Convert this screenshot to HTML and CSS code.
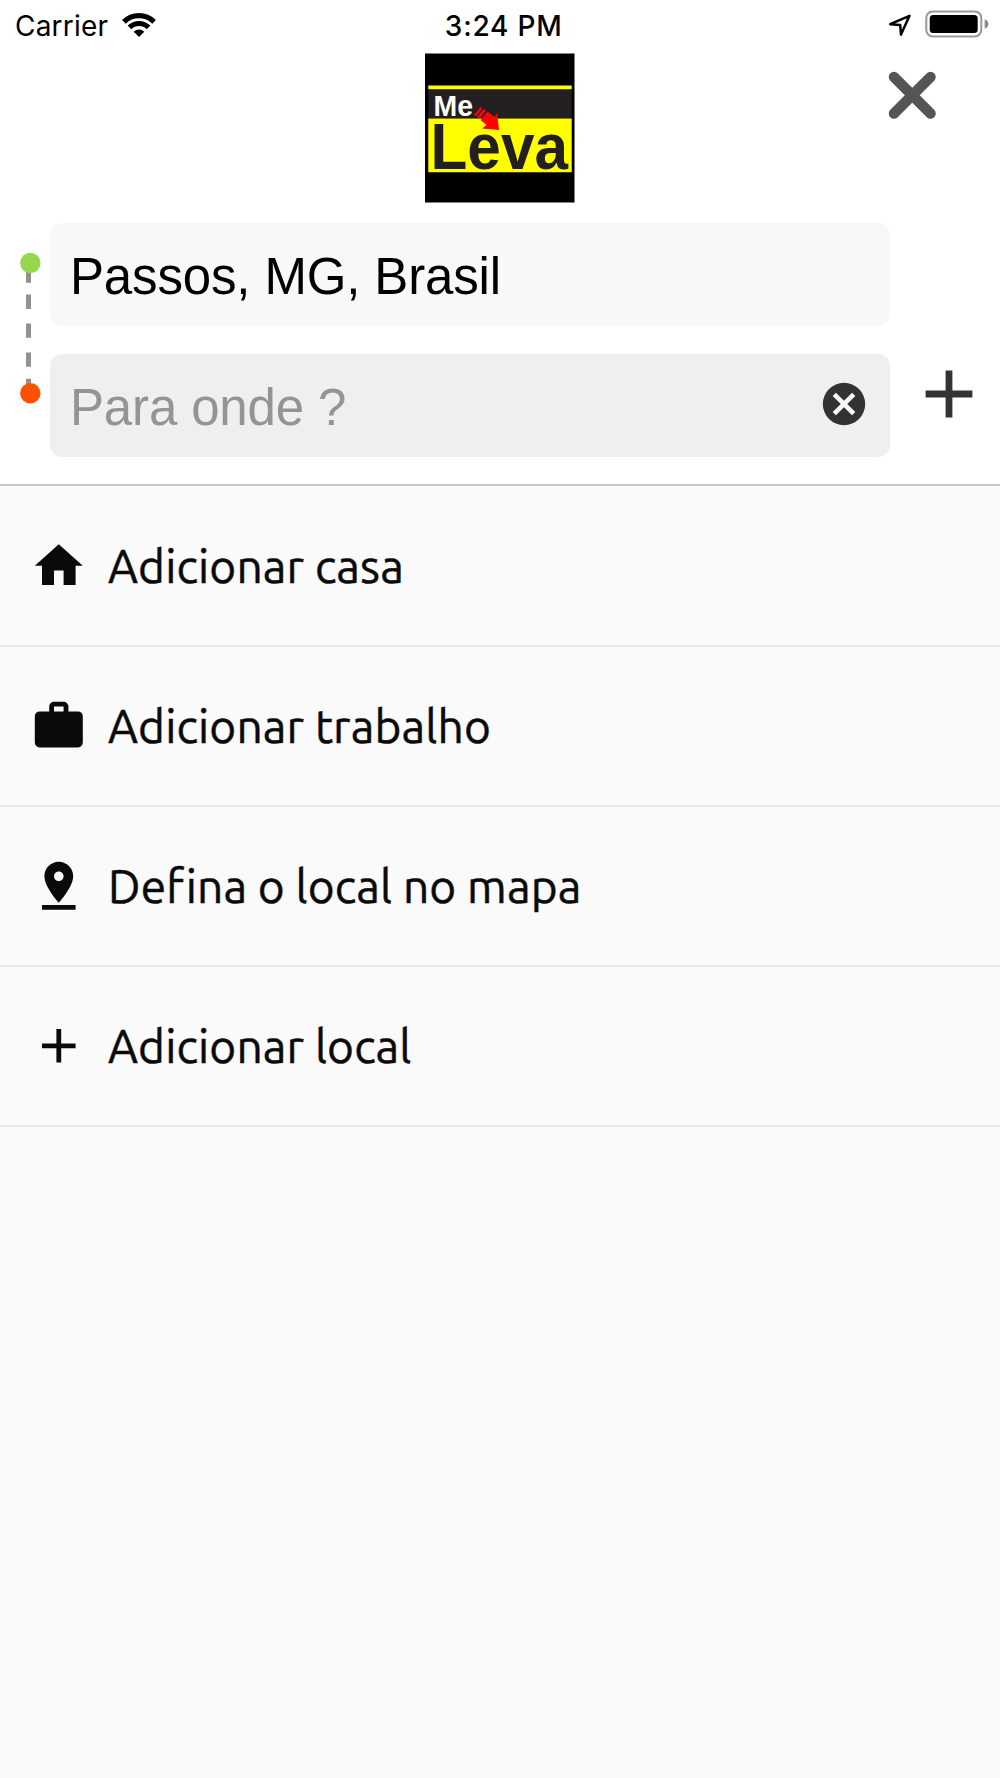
FILE: index.html
```html
<!DOCTYPE html>
<html lang="pt-BR">
<head>
<meta charset="utf-8">
<title>Me Leva</title>
<link rel="stylesheet" href="styles.css">
</head>
<body>
<header class="header">
  <div class="status">
    <div class="status-left">
      <span class="carrier">Carrier</span>
      <svg class="wifi" width="36" height="26" viewBox="0 0 36 26">
        <path d="M2.9 9.9A21.4 21.4 0 0 1 33.1 9.9M8.45 15.45A13.5 13.5 0 0 1 27.55 15.45" fill="none" stroke="#000" stroke-width="5.2"/>
        <path d="M18 25L12.7 19.7A7.5 7.5 0 0 1 23.3 19.7Z"/>
      </svg>
    </div>
    <span class="time">3:24 PM</span>
    <div class="status-right">
      <svg width="24" height="24" viewBox="0 0 24 24"><path d="M2.2 11.2L21.5 2.8L13 21.6L12.2 12Z" fill="none" stroke="#000" stroke-width="2.5" stroke-linejoin="round"/></svg>
      <svg width="64" height="28" viewBox="0 0 64 28">
        <rect x="1.3" y="1.4" width="55" height="25" rx="6.5" fill="none" stroke="#999" stroke-width="2"/>
        <rect x="4.7" y="4.9" width="48" height="18.2" rx="3.5"/>
        <path d="M59.7 9.2A5 5 0 0 1 59.7 18.8Z" fill="#888"/>
      </svg>
    </div>
  </div>
  <div class="brand">
    <svg class="logo" width="150" height="150" viewBox="0 0 150 150">
      <path d="M0 .5H149.5V149.5H0Z"/>
      <path fill="#ff0" d="M3.3 32.5H146.7V36.5H3.3ZM3.3 65.6H146.7V119.3H3.3Z"/>
      <path fill="#231f20" d="M3.3 36.5H146.7V65H3.3Z"/>
      <text class="logo-me" x="8.5" y="63.3" textLength="39.5" lengthAdjust="spacingAndGlyphs">Me</text>
      <text class="logo-leva" x="5.5" y="116.3" textLength="137.5" lengthAdjust="spacingAndGlyphs">Leva</text>
      <path fill="red" d="M49 62L55.5 54L57.5 55.2L51 63.2ZM52 64L58.5 56L61 57.5L54.5 65.7ZM55.5 67L62.5 58.5L69.5 64L72 60L74 77L57 75.5L61.5 72Z"/>
    </svg>
    <button class="icon-button close" aria-label="Fechar">
      <svg width="48" height="48" viewBox="0 0 48 48"><path d="M6 6L42.5 42.5M42.5 6L6 42.5" stroke="#555" stroke-width="10.5" stroke-linecap="round"/></svg>
    </button>
  </div>
  <div class="trip">
    <svg class="route" width="50" height="234" viewBox="0 0 50 234">
      <path fill="#929292" d="M26 48h5v11.7h-5zM26 71.5h5V86h-5zM26 100.4h5v14.4h-5zM26 129.4h5v14.3h-5zM26 155.7h5v8h-5z"/>
      <circle cx="30.3" cy="40" r="10.2" fill="#95d84f"/>
      <circle cx="30.3" cy="170.3" r="10.2" fill="#ff5000"/>
    </svg>
    <div class="fields">
      <div class="field">Passos, MG, Brasil</div>
      <div class="field destination">
        <span>Para onde ?</span>
        <svg width="44" height="44" viewBox="0 0 44 44"><circle cx="22" cy="22" r="21.2" fill="#333"/><path d="M12.3 12.3L31.7 31.7M31.7 12.3L12.3 31.7" stroke="#f8f8f8" stroke-width="4.6"/></svg>
      </div>
    </div>
    <button class="icon-button add" aria-label="Adicionar parada">
      <svg width="48" height="48" viewBox="0 0 48 48"><path d="M.6 24H47.4M24 .6V47.4" stroke="#333" stroke-width="6.8"/></svg>
    </button>
  </div>
</header>
<main class="options">
  <div class="option">
    <svg class="option-icon" viewBox="0 0 24 24"><path d="M10 20v-6h4v6h5v-8h3L12 3 2 12h3v8z"/></svg>
    <span>Adicionar casa</span>
  </div>
  <div class="option">
    <svg class="option-icon" viewBox="0 0 24 24"><path fill-rule="evenodd" d="M10 2h4a2 2 0 0 1 2 2v2h4a2 2 0 0 1 2 2v11a2 2 0 0 1-2 2H4a2 2 0 0 1-2-2V8a2 2 0 0 1 2-2h4V4a2 2 0 0 1 2-2zM10 4v2h4V4z"/></svg>
    <span>Adicionar trabalho</span>
  </div>
  <div class="option">
    <svg class="option-icon" viewBox="0 0 24 24"><path d="M18 8c0-3.31-2.69-6-6-6S6 4.69 6 8c0 4.5 6 11 6 11s6-6.5 6-11zm-8 0c0-1.1.9-2 2-2s2 .9 2 2-.89 2-2 2c-1.1 0-2-.9-2-2zM5 20v2h14v-2H5z"/></svg>
    <span>Defina o local no mapa</span>
  </div>
  <div class="option">
    <svg class="option-icon" viewBox="0 0 24 24"><path d="M19 13h-6v6h-2v-6H5v-2h6V5h2v6h6v2z"/></svg>
    <span>Adicionar local</span>
  </div>
</main>
</body>
</html>
```
FILE: styles.css
```css
* { box-sizing: border-box; }
body {
  margin: 0;
  min-height: 1778px;
  background: #fafafa;
  color: #0a0a0a;
  font-family: "Liberation Sans", Arial, sans-serif;
}
svg { display: block; flex: none; }
.header {
  height: 486px;
  background: #fff;
  border-bottom: 2px solid #c8c8c8;
}
.status {
  height: 53px;
  display: grid;
  grid-template-columns: 1fr auto 1fr;
  padding: 0 11.5px 0 15px;
  color: #000;
  font: 28px/52px Inter, sans-serif;
}
.status-left { display: flex; gap: 12.5px; }
.wifi { margin-top: 11.5px; }
.carrier { letter-spacing: .2px; }
.time { font-weight: 500; letter-spacing: .8px; padding-left: 4px; }
.status-right {
  display: flex;
  justify-content: flex-end;
  gap: 13px;
  padding-top: 10px;
}
.status-right svg:first-child { margin-top: 3px; }
.brand {
  height: 150px;
  display: grid;
  grid-template-columns: 1fr 150px 1fr;
}
.logo { grid-column: 2; }
.logo-me, .logo-leva { font-weight: bold; }
.logo-me { font-size: 29px; fill: #fff; }
.logo-leva { font-size: 65px; fill: #231f20; }
.icon-button {
  padding: 0;
  border: 0;
  background: none;
}
.close {
  justify-self: end;
  align-self: start;
  margin: 18px 64px 0 0;
}
.trip {
  display: flex;
  padding-top: 20px;
}
.fields {
  width: 839.6px;
  display: grid;
  gap: 27.7px;
}
.field {
  height: 103px;
  padding: 5px 24px 0 20px;
  display: flex;
  align-items: center;
  justify-content: space-between;
  border-radius: 12px;
  background: #f8f8f8;
  color: #000;
  font-size: 51px;
  line-height: 60px;
  letter-spacing: -.15px;
}
.destination { background: #efefef; color: #959493; }
.destination svg { margin-bottom: 8px; }
.add {
  align-self: start;
  margin: 147px 0 0 35.6px;
}
.options { padding-top: .6px; }
.option {
  height: 160.1px;
  padding-left: 30px;
  display: flex;
  align-items: center;
  gap: 20.5px;
  border-bottom: 2px solid #ebebeb;
  font: 46px/60px Ubuntu, "Noto Sans", sans-serif;
  letter-spacing: .15px;
  -webkit-text-stroke: .5px #0a0a0a;
}
.option-icon {
  width: 57.6px;
  height: 57.6px;
  fill: #0a0a0a;
}
```
